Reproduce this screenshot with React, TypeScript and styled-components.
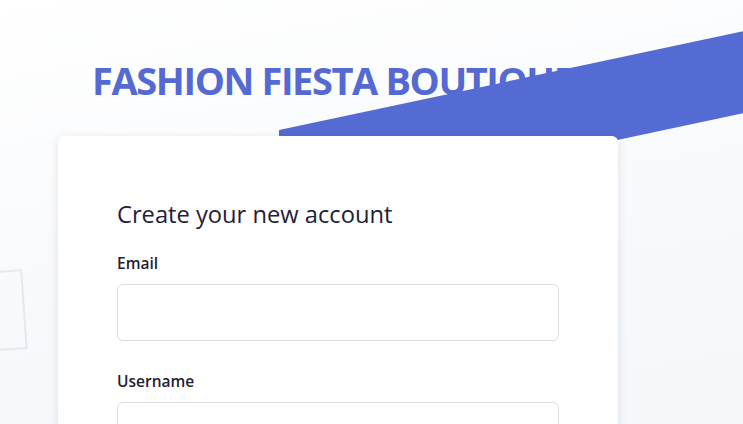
import React from 'react'
import styled, { createGlobalStyle } from 'styled-components'

const GlobalStyle = createGlobalStyle`
  * { box-sizing: border-box; }
  html, body { margin: 0; padding: 0; }
  body {
    font-family: "Open Sans", "Noto Sans", sans-serif;
    color: #1f2137;
  }
`

export default function App() {
  return (
    <>
      <GlobalStyle />
      <Page>
        <Band />
        <Frame />
        <Header>
          <Title>FASHION FIESTA BOUTIQUE</Title>
        </Header>
        <Card>
          <Heading>Create your new account</Heading>
          <Field>
            <Label htmlFor="email">Email</Label>
            <Input id="email" type="email" />
          </Field>
          <Field>
            <Label htmlFor="username">Username</Label>
            <Input id="username" type="text" />
          </Field>
        </Card>
      </Page>
    </>
  )
}

const Page = styled.div`
  position: relative;
  overflow: hidden;
  min-height: 100vh;
  padding: 0 0 40px 58px;
  background: linear-gradient(170deg, #ffffff 0%, #f7f9fb 45%, #f3f6fa 100%);
`

const Band = styled.div`
  position: absolute;
  left: 279px;
  top: 130px;
  width: 700px;
  height: 82px;
  background: #556bd4;
  transform: skewY(-12deg);
  transform-origin: left top;
  z-index: 1;
`

const Frame = styled.div`
  position: absolute;
  left: -60px;
  top: 272px;
  width: 85px;
  height: 80px;
  border: 2px solid #e4e9f0;
  transform: rotate(-4deg);
`

const Header = styled.header`
  padding: 54px 0 0 34px;
  height: 136px;
`

const Title = styled.h1`
  margin: 0;
  font-family: "Open Sans", "Noto Sans", sans-serif;
  font-size: 38px;
  font-weight: 700;
  letter-spacing: -1.4px;
  line-height: 52px;
  color: #5569d3;
  white-space: nowrap;
`

const Card = styled.main`
  position: relative;
  z-index: 2;
  width: 560px;
  background: #ffffff;
  border-radius: 6px;
  padding: 62px 59px 40px;
  box-shadow: 0 2px 10px rgba(40, 50, 80, 0.12);
`

const Heading = styled.h2`
  margin: 0 0 22px;
  font-size: 23.7px;
  font-weight: 400;
  line-height: 32px;
  color: #1f2137;
`

const Field = styled.div`
  display: flex;
  flex-direction: column;
  margin-bottom: 29px;
`

const Label = styled.label`
  font-size: 15.5px;
  font-weight: 600;
  line-height: 22px;
  margin-bottom: 10px;
  color: #1f2137;
`

const Input = styled.input`
  width: 442px;
  height: 57px;
  border: 1px solid #dcdde0;
  border-radius: 6px;
  background: #ffffff;
  padding: 0 14px;
  font-size: 16px;
  outline: none;
`
